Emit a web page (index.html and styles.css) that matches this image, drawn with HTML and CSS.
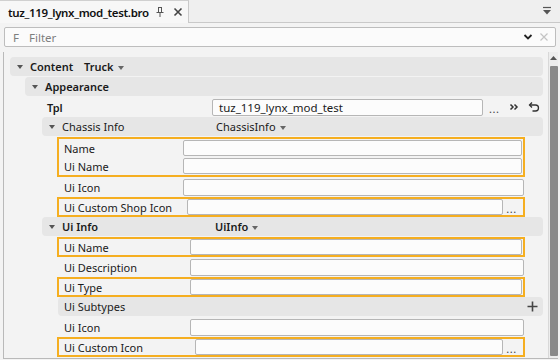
FILE: index.html
```html
<!DOCTYPE html>
<html>
<head>
<meta charset="utf-8">
<link rel="stylesheet" href="styles.css">
</head>
<body>
<div class="tabbar">
  <div class="tab">
    <span class="tab-title">tuz_119_lynx_mod_test.bro</span>
    <svg class="ico pin" width="10" height="12" viewBox="0 0 10 12"><path d="M3 1.5h4M3.5 1.5v4.5M6.5 1.5v4.5M1.5 6.5h7M5 6.5v4.5" stroke="#555" stroke-width="1" fill="none"/></svg>
    <svg class="ico close" width="10" height="10" viewBox="0 0 10 10"><path d="M1.5 1.5l7 7M8.5 1.5l-7 7" stroke="#444" stroke-width="1.6"/></svg>
  </div>
  <div class="tab-fill"></div>
  <svg class="tab-menu" width="10" height="10" viewBox="0 0 10 10"><path d="M1 1.5h8" stroke="#555" stroke-width="1.2"/><path d="M1 4h8L5 8.5z" fill="#555"/></svg>
</div>
<div class="filter">
  <span class="f">F</span><span class="ph">Filter</span>
  <svg class="chev" width="10" height="8" viewBox="0 0 10 8"><path d="M1.5 2l3.5 3.5L8.5 2" stroke="#222" stroke-width="1.8" fill="none"/></svg>
  <svg class="fx" width="10" height="10" viewBox="0 0 10 10"><path d="M1.5 1.5l7 7M8.5 1.5l-7 7" stroke="#c4c4c4" stroke-width="1.2"/></svg>
</div>
<div class="panel">
  <div class="tree">
    <div class="row grp l0"><span class="tri"></span><span class="gname b w-content">Content</span><span class="gval b">Truck<span class="dd"></span></span></div>
    <div class="row grp l1"><span class="tri"></span><span class="gname b">Appearance</span></div>
    <div class="row l2 tpl"><span class="lbl b w-tpl">Tpl</span><span class="input">tuz_119_lynx_mod_test</span>
      <span class="dots">...</span>
      <svg class="act" width="10" height="10" viewBox="0 0 10 10"><path d="M1.5 2.5l2.5 2.5-2.5 2.5M5.5 2.5l2.5 2.5-2.5 2.5" stroke="#333" stroke-width="1.5" fill="none"/></svg>
      <svg class="act undo" width="12" height="12" viewBox="0 0 12 12"><path d="M4 1.5L1.5 4 4 6.5" stroke="#333" stroke-width="1.3" fill="none"/><path d="M1.8 4H7.5a3 3 0 0 1 0 6H4.5" stroke="#333" stroke-width="1.3" fill="none"/></svg>
    </div>
    <div class="row grp l2"><span class="tri"></span><span class="gname w-group">Chassis Info</span><span class="gval">ChassisInfo<span class="dd"></span></span></div>
    <div class="box two l3">
      <div class="row field"><span class="lbl w-c">Name</span><span class="input"></span></div>
      <div class="row field"><span class="lbl w-c">Ui Name</span><span class="input"></span></div>
    </div>
    <div class="row field plain l3"><span class="lbl w-c">Ui Icon</span><span class="input"></span></div>
    <div class="box one l3">
      <div class="row field"><span class="lbl w-shop">Ui Custom Shop Icon</span><span class="input"></span><span class="dots">...</span></div>
    </div>
    <div class="row grp l2"><span class="tri"></span><span class="gname b w-group2">Ui Info</span><span class="gval b">UiInfo<span class="dd"></span></span></div>
    <div class="box one l3">
      <div class="row field"><span class="lbl w-u">Ui Name</span><span class="input"></span></div>
    </div>
    <div class="row field plain l3"><span class="lbl w-u">Ui Description</span><span class="input"></span></div>
    <div class="box one l3">
      <div class="row field"><span class="lbl w-u">Ui Type</span><span class="input"></span></div>
    </div>
    <div class="row grp sub l3"><span class="gname">Ui Subtypes</span>
      <svg class="plus" width="11" height="11" viewBox="0 0 11 11"><path d="M5.5 0.5v10M0.5 5.5h10" stroke="#444" stroke-width="1.6"/></svg>
    </div>
    <div class="row field plain l3"><span class="lbl w-u">Ui Icon</span><span class="input"></span></div>
    <div class="box one l3">
      <div class="row field"><span class="lbl w-ci">Ui Custom Icon</span><span class="input"></span><span class="dots">...</span></div>
    </div>
  </div>
  <div class="scrollbar">
    <div class="sarrow"><svg width="7" height="4" viewBox="0 0 7 4"><path d="M0 4L3.5 0 7 4z" fill="#555"/></svg></div>
    <div class="thumb"></div>
  </div>
</div>
</body>
</html>
```
FILE: styles.css
```css
* { box-sizing: border-box; }
body {
  margin: 0;
  width: 560px;
  height: 360px;
  overflow: hidden;
  background: #f3f3f3;
  font-family: "Noto Sans", "Open Sans", sans-serif;
  font-size: 11px;
  color: #1a1a1a;
}
svg { flex: none; }
.b { font-weight: 600; }

.tabbar {
  display: flex;
  align-items: stretch;
  height: 23px;
  background: #efefef;
  border-bottom: 1px solid #c9c9c9;
}
.tab {
  display: flex;
  align-items: center;
  padding: 0 6px 0 8px;
  width: 189px;
  background: #f7f7f7;
  border-right: 1px solid #c9c9c9;
  border-top: 1px solid #d0d0d0;
  margin-bottom: -1px;
}
.tab-title { font-weight: 600; font-size: 11.5px; letter-spacing: -0.35px; color: #111; }
.ico.pin { margin-left: 6px; }
.ico.close { margin-left: 8px; }
.tab-fill { flex: 1; }
.tab-menu { align-self: center; margin-right: 8px; }

.filter {
  display: flex;
  align-items: center;
  margin: 4px 4px 0 4px;
  height: 20px;
  border: 1px solid #bdbdbd;
  border-radius: 2px;
  background: #fbfbfb;
  color: #7e7e7e;
  padding: 0 6px 0 8px;
  font-size: 11.5px;
}
.filter .f { width: 16px; }
.filter .ph { flex: 1; }
.filter .chev { margin-right: 6px; }

.panel {
  display: flex;
  margin: 5px 2px 0 3px;
  height: 307px;
  border-left: 1px solid #b9b9b9;
  border-bottom: 1px solid #b9b9b9;
}
.tree {
  flex: 1;
  padding: 5px 5px 0 6px;
  display: flex;
  flex-direction: column;
}
.row {
  display: flex;
  align-items: center;
  height: 20px;
  white-space: nowrap;
}
.grp {
  height: 19px;
  margin-bottom: 1px;
  background: #e6e6e6;
  border-radius: 4px;
  padding-left: 7px;
}
.l0 { margin-left: 0; }
.l1 { margin-left: 15px; }
.l2 { margin-left: 32px; }
.l3 { margin-left: 47px; }
.tri {
  width: 0; height: 0;
  border-left: 3.5px solid transparent;
  border-right: 3.5px solid transparent;
  border-top: 4px solid #555;
  margin-right: 7px;
}
.w-content { width: 54px; }
.w-group { width: 154px; }
.w-group2 { width: 153px; }
.dd {
  display: inline-block;
  width: 0; height: 0;
  border-left: 3.5px solid transparent;
  border-right: 3.5px solid transparent;
  border-top: 4px solid #666;
  margin-left: 4px;
  vertical-align: middle;
}
.input {
  flex: 1;
  height: 17px;
  border: 1px solid #b6b6b6;
  border-radius: 2px;
  background: #fcfcfc;
  padding: 0 6px;
  line-height: 15px;
}
.tpl { padding-left: 5px; margin-right: 3px; }
.w-tpl { width: 165px; }
.tpl .input { flex: 0 0 271px; font-size: 11.5px; }
.tpl .dots { margin-left: 6px; }
.tpl .act { margin-left: 10px; }
.tpl .undo { margin-left: 9px; }
.dots { color: #444; letter-spacing: 0.5px; font-size: 11px; line-height: 10px; align-self: flex-end; margin-bottom: 3px; margin-left: 4px; }

.box {
  border: 2px solid #f5ae20;
  margin-right: 18px;
  display: flex;
  flex-direction: column;
}
.box.two .row { height: 18px; }
.box.one .row { height: 16px; }
.box .input { height: 16px; line-height: 14px; }
.field { padding-left: 5px; padding-right: 1px; }
.plain { padding-left: 7px; margin-right: 18px; padding-right: 1px; }
.lbl { flex: none; }
.w-c { width: 119px; }
.w-shop { width: 123px; }
.w-u { width: 126px; }
.w-ci { width: 131px; }
.field .dots { width: 16px; margin-left: 3px; margin-bottom: 1px; }

.sub { padding-left: 6px; justify-content: space-between; padding-right: 5px; margin-left: 48px; }

.scrollbar {
  width: 11px;
  background: #ededed;
  border-left: 1px solid #d8d8d8;
  display: flex;
  flex-direction: column;
  align-items: center;
  padding-top: 2px;
}
.sarrow { height: 8px; display: flex; align-items: center; }
.thumb {
  margin-top: 4px;
  width: 8px;
  flex: 1;
  background: #8a8a8a;
  border-radius: 1px;
  margin-bottom: 2px;
}
```
